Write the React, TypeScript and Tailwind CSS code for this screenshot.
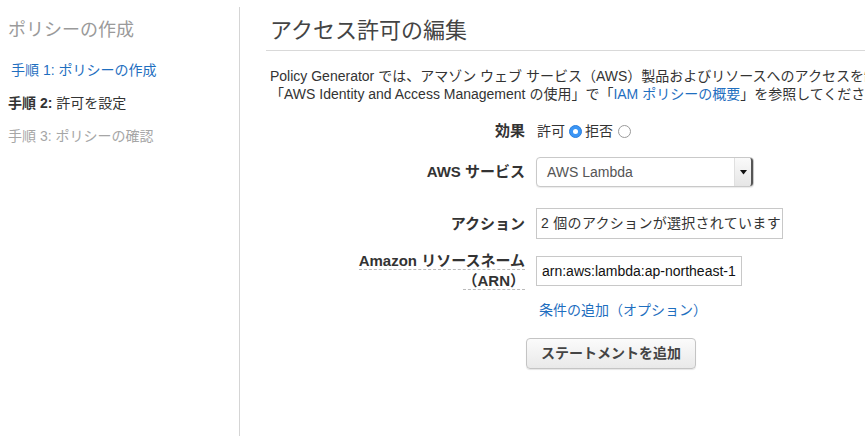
import React from "react";

const FONT = { fontFamily: '"Liberation Sans", "Noto Sans CJK JP", sans-serif' };

export default function App() {
  return (
    <div className="w-[865px] h-[439px] overflow-hidden bg-white flex pt-[7px]" style={FONT}>
      <aside className="w-[240px] shrink-0 h-[429px] border-r border-[#d5d5d5]">
        <div className="pl-[8px] pt-[12px] text-[18px] leading-[22px] text-[#9a9a9a]">ポリシーの作成</div>
        <div className="mt-[19px] pl-[11px] text-[14px] leading-[20px] text-[#1f6fbf]">
          手順 1: ポリシーの作成
        </div>
        <div className="mt-[13px] pl-[8px] text-[14px] leading-[20px] text-[#333]">
          <span className="font-bold">手順 2:</span> 許可を設定
        </div>
        <div className="mt-[13px] pl-[8px] text-[14px] leading-[20px] text-[#a6a6a6]">
          手順 3: ポリシーの確認
        </div>
      </aside>
      <main className="flex-1 min-w-0 pl-[26px] overflow-hidden">
        <h1 className="pl-[4px] pt-[10px] pb-[5px] text-[22px] leading-[28px] text-[#444] border-b border-[#d9d9d9] whitespace-nowrap">
          アクセス許可の編集
        </h1>
        <div className="pl-[4px] mt-[16px] text-[14px] leading-[18px] text-[#333] whitespace-nowrap">
          <div>Policy Generator では、アマゾン ウェブ サービス（AWS）製品およびリソースへのアクセスを制御</div>
          <div>
            「AWS Identity and Access Management の使用」で「<span className="text-[#1f6fbf]">IAM ポリシーの概要</span>」を参照してくださ
          </div>
        </div>

        <div className="mt-[18px] grid grid-cols-[259px_1fr] gap-x-[11px] items-center">
          <div className="text-right text-[15px] font-bold text-[#333] leading-[20px]">効果</div>
          <div className="flex items-center text-[14px] text-[#333] leading-[20px]">
            <span className="ml-[1px]">許可</span>
            <span className="ml-[4px] w-[13px] h-[13px] rounded-full bg-[#3a95f5] border border-[#2c7fdd] flex items-center justify-center">
              <span className="w-[5px] h-[5px] rounded-full bg-white" />
            </span>
            <span className="ml-[3px]">拒否</span>
            <span className="ml-[5px] w-[13px] h-[13px] rounded-full bg-white border border-[#9a9a9a]" />
          </div>

          <div className="mt-[16px] text-right text-[15px] font-bold text-[#333] leading-[20px]">AWS サービス</div>
          <div className="mt-[16px] flex">
            <div className="w-[218px] h-[30px] rounded-[4px] border border-[#c9c9c9] bg-white flex items-stretch shadow-[0_1px_1px_rgba(0,0,0,0.08)]">
              <div className="flex-1 pl-[10px] flex items-center text-[14px] text-[#555]">AWS Lambda</div>
              <div className="w-[19px] bg-gradient-to-b from-[#fafafa] to-[#e6e6e6] border-l border-[#e0e0e0] border-r-[2px] border-r-[#555] rounded-r-[3px] flex items-center justify-center">
                <svg width="7" height="5" viewBox="0 0 7 5"><path d="M0 0h7L3.5 4.5z" fill="#111" /></svg>
              </div>
            </div>
          </div>

          <div className="mt-[21px] text-right text-[15px] font-bold text-[#333] leading-[20px]">アクション</div>
          <div className="mt-[21px] flex">
            <div className="w-[247px] h-[31px] border border-[#c8c8c8] bg-white flex items-center pl-[4px] text-[14px] tracking-[0.3px] text-[#333] whitespace-nowrap overflow-hidden">
              2 個のアクションが選択されています
            </div>
          </div>

          <div className="mt-[12px] flex justify-end">
            <div className="w-[172px] text-right text-[15px] font-bold text-[#333] leading-[20px]">
              <span className="border-b border-dashed border-[#bbb]">
                Amazon リソースネーム（ARN）
              </span>
            </div>
          </div>
          <div className="mt-[12px] flex">
            <div className="w-[206px] h-[30px] border border-[#c8c8c8] bg-white flex items-center pl-[5px] text-[14px] text-[#111] whitespace-nowrap">
              arn:aws:lambda:ap-northeast-1
            </div>
          </div>

          <div />
          <div className="mt-[9px] pl-[3px] text-[14px] leading-[20px] text-[#1f6fbf]">条件の追加（オプション）</div>
        </div>

        <div className="mt-[18px] ml-[260px]">
          <button className="w-[170px] h-[31px] rounded-[4px] border border-[#c4c4c4] bg-gradient-to-b from-[#fbfbfb] to-[#e9e9e9] text-[14px] font-bold text-[#444] shadow-[0_1px_1px_rgba(0,0,0,0.1)]">
            ステートメントを追加
          </button>
        </div>
      </main>
    </div>
  );
}
